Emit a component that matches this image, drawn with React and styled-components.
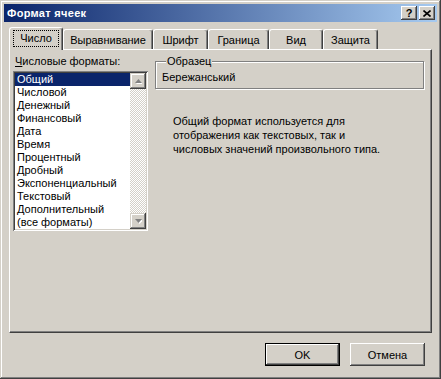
import React, { useState } from 'react';
import styled, { createGlobalStyle } from 'styled-components';

const GlobalStyle = createGlobalStyle`
    html, body {
        margin: 0;
        padding: 0;
        background: #d4d0c8;
    }
    * {
        box-sizing: border-box;
    }
`;

const tabs = [
    { title: 'Число', width: 54 },
    { title: 'Выравнивание', width: 90 },
    { title: 'Шрифт', width: 55 },
    { title: 'Граница', width: 61 },
    { title: 'Вид', width: 54 },
    { title: 'Защита', width: 55 },
];

const formats = [
    'Общий',
    'Числовой',
    'Денежный',
    'Финансовый',
    'Дата',
    'Время',
    'Процентный',
    'Дробный',
    'Экспоненциальный',
    'Текстовый',
    'Дополнительный',
    '(все форматы)',
];

const Window = styled.div`
    width: 441px;
    height: 379px;
    padding: 4px;
    background: #d4d0c8;
    font-family: 'Liberation Sans', Arial, sans-serif;
    font-size: 11px;
    color: #000;
    box-shadow: inset -1px -1px #404040, inset 1px 1px #d4d0c8,
        inset -2px -2px #808080, inset 2px 2px #fff;
    display: flex;
    flex-direction: column;
`;

const TitleBar = styled.div`
    height: 18px;
    display: flex;
    align-items: center;
    justify-content: space-between;
    padding: 0 2px 0 2px;
    background: linear-gradient(to right, #0a246a, #a6caf0);
`;

const TitleText = styled.span`
    color: #fff;
    font-weight: bold;
    font-size: 11px;
    letter-spacing: 0.3px;
    padding-left: 1px;
`;

const TitleButtons = styled.div`
    display: flex;
    gap: 2px;
`;

const TitleButton = styled.div`
    width: 16px;
    height: 14px;
    background: #d4d0c8;
    box-shadow: inset -1px -1px #404040, inset 1px 1px #fff, inset -2px -2px #808080;
    display: flex;
    align-items: center;
    justify-content: center;
    font-weight: bold;
    font-size: 11px;
    line-height: 1;
`;

const Body = styled.div`
    padding: 6px 6px 0 5px;
    display: flex;
    flex-direction: column;
`;

const TabStrip = styled.div`
    height: 22px;
    display: flex;
    align-items: flex-end;
    margin-bottom: -1px;
    position: relative;
    z-index: 1;
`;

const Tab = styled.div`
    width: ${({ $width }) => $width}px;
    height: ${({ $active }) => ($active ? 23 : 20)}px;
    margin-bottom: ${({ $active }) => ($active ? 0 : 1)}px;
    background: #d4d0c8;
    border-top: 1px solid #fff;
    border-left: 1px solid #fff;
    border-right: 1px solid #404040;
    border-radius: 3px 3px 0 0;
    box-shadow: inset -1px 0 #808080;
    display: flex;
    align-items: ${({ $active }) => ($active ? 'flex-start' : 'center')};
    padding-top: ${({ $active }) => ($active ? 3 : 0)}px;
    justify-content: center;
`;

const FocusLabel = styled.span`
    outline: 1px dotted #000;
    padding: 1px 6px;
    line-height: 13px;
`;

const Panel = styled.div`
    width: 423px;
    height: 284px;
    border-top: 1px solid #fff;
    border-left: 1px solid #fff;
    border-right: 1px solid #404040;
    border-bottom: 1px solid #404040;
    box-shadow: inset -1px -1px #808080;
    padding: 5px 3px 0 3px;
    display: flex;
    gap: 7px;
`;

const LeftColumn = styled.div`
    width: 135px;
    display: flex;
    flex-direction: column;
`;

const FieldLabel = styled.div`
    padding-left: 2px;
    height: 16px;
    line-height: 13px;
`;

const Underline = styled.span`
    text-decoration: underline;
`;

const ListBox = styled.div`
    height: 160px;
    padding: 2px;
    background: #fff;
    box-shadow: inset 1px 1px #808080, inset -1px -1px #fff,
        inset 2px 2px #404040, inset -2px -2px #d4d0c8;
    display: flex;
`;

const Items = styled.div`
    flex: 1;
    display: flex;
    flex-direction: column;
`;

const Item = styled.div`
    height: 13px;
    line-height: 13px;
    padding-left: 2px;
    background: ${({ $selected }) => ($selected ? '#0a246a' : 'transparent')};
    color: ${({ $selected }) => ($selected ? '#fff' : '#000')};
    cursor: default;
    white-space: nowrap;
`;

const ScrollBar = styled.div`
    width: 16px;
    display: flex;
    flex-direction: column;
    justify-content: space-between;
    background: repeating-conic-gradient(#fff 0 25%, #d4d0c8 0 50%) 0 0 / 2px 2px;
`;

const ScrollButton = styled.div`
    width: 16px;
    height: 16px;
    background: #d4d0c8;
    box-shadow: inset -1px -1px #404040, inset 1px 1px #d4d0c8,
        inset -2px -2px #808080, inset 2px 2px #fff;
    display: flex;
    align-items: center;
    justify-content: center;
`;

const RightColumn = styled.div`
    width: 269px;
    display: flex;
    flex-direction: column;
`;

const GroupBox = styled.fieldset`
    margin: 0;
    padding: 3px 6px 4px 6px;
    height: 34px;
    border: 1px solid #808080;
    box-shadow: inset 1px 1px #fff, 1px 1px #fff;
`;

const Legend = styled.legend`
    padding: 0 1px;
    margin-left: 4px;
    line-height: 13px;
    background: #d4d0c8;
`;

const Sample = styled.div`
    line-height: 13px;
`;

const Description = styled.p`
    margin: 25px 0 0 18px;
    line-height: 14px;
    width: 220px;
`;

const ButtonRow = styled.div`
    display: flex;
    justify-content: flex-end;
    gap: 10px;
    margin-top: 10px;
    padding-right: 6px;
`;

const Button = styled.div`
    width: 75px;
    height: 23px;
    background: #d4d0c8;
    display: flex;
    align-items: center;
    justify-content: center;
    box-shadow: ${({ $default }) =>
        $default
            ? 'inset 0 0 0 1px #000, inset -2px -2px #404040, inset 2px 2px #fff, inset -3px -3px #808080'
            : 'inset -1px -1px #404040, inset 1px 1px #fff, inset -2px -2px #808080'};
`;

const Arrow = ({ down }) => (
    <svg width="7" height="5" viewBox="0 0 7 5">
        {down ? (
            <>
                <path d="M1 1 h7 l-3.5 4z" fill="#fff" />
                <path d="M0 0 h7 l-3.5 4z" fill="#808080" />
            </>
        ) : (
            <>
                <path d="M1 5 h7 l-3.5 -4z" fill="#fff" />
                <path d="M0 4 h7 l-3.5 -4z" fill="#808080" />
            </>
        )}
    </svg>
);

const App = () => {
    const [active, setActive] = useState(0);
    const [selected, setSelected] = useState(0);

    return (
        <>
            <GlobalStyle />
            <Window>
                <TitleBar>
                    <TitleText>Формат ячеек</TitleText>
                    <TitleButtons>
                        <TitleButton>?</TitleButton>
                        <TitleButton>
                            <svg width="8" height="7" viewBox="0 0 8 7">
                                <path d="M0.5 0.5 L7.5 6.5 M7.5 0.5 L0.5 6.5" stroke="#000" strokeWidth="1.6" />
                            </svg>
                        </TitleButton>
                    </TitleButtons>
                </TitleBar>
                <Body>
                    <TabStrip>
                        {tabs.map((tab, index) => (
                            <Tab
                                key={index}
                                $width={tab.width}
                                $active={index === active}
                                onClick={() => setActive(index)}
                            >
                                {index === active ? <FocusLabel>{tab.title}</FocusLabel> : tab.title}
                            </Tab>
                        ))}
                    </TabStrip>
                    <Panel>
                        <LeftColumn>
                            <FieldLabel>
                                <Underline>Ч</Underline>исловые форматы:
                            </FieldLabel>
                            <ListBox>
                                <Items>
                                    {formats.map((item, index) => (
                                        <Item
                                            key={index}
                                            $selected={index === selected}
                                            onClick={() => setSelected(index)}
                                        >
                                            {item}
                                        </Item>
                                    ))}
                                </Items>
                                <ScrollBar>
                                    <ScrollButton>
                                        <Arrow />
                                    </ScrollButton>
                                    <ScrollButton>
                                        <Arrow down />
                                    </ScrollButton>
                                </ScrollBar>
                            </ListBox>
                        </LeftColumn>
                        <RightColumn>
                            <GroupBox>
                                <Legend>Образец</Legend>
                                <Sample>Бережанський</Sample>
                            </GroupBox>
                            <Description>
                                Общий формат используется для отображения как текстовых, так и
                                числовых значений произвольного типа.
                            </Description>
                        </RightColumn>
                    </Panel>
                    <ButtonRow>
                        <Button $default>OK</Button>
                        <Button>Отмена</Button>
                    </ButtonRow>
                </Body>
            </Window>
        </>
    );
};

export default App;
